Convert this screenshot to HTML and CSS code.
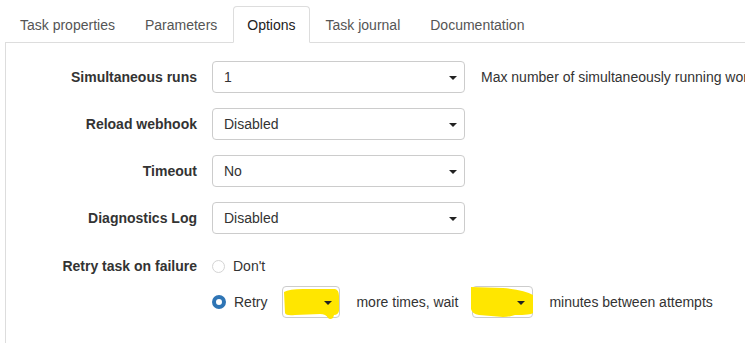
FILE: index.html
```html
<!DOCTYPE html>
<html>

<head>
    <meta charset="utf-8" />
    <title>Task options</title>
    <link rel="stylesheet" href="styles.css">
</head>

<body>
    <div class="page">
        <ul class="tabs">
            <li><a href="#">Task properties</a></li>
            <li><a href="#">Parameters</a></li>
            <li class="active"><a href="#">Options</a></li>
            <li><a href="#">Task journal</a></li>
            <li><a href="#">Documentation</a></li>
        </ul>
        <div class="panel">
            <div class="form-row">
                <label class="row-label">Simultaneous runs</label>
                <div class="select"><span>1</span><i class="caret"></i></div>
                <span class="help">Max number of simultaneously running workers</span>
            </div>
            <div class="form-row">
                <label class="row-label">Reload webhook</label>
                <div class="select"><span>Disabled</span><i class="caret"></i></div>
            </div>
            <div class="form-row">
                <label class="row-label">Timeout</label>
                <div class="select"><span>No</span><i class="caret"></i></div>
            </div>
            <div class="form-row">
                <label class="row-label">Diagnostics Log</label>
                <div class="select"><span>Disabled</span><i class="caret"></i></div>
            </div>
            <div class="form-row retry-row">
                <label class="row-label top">Retry task on failure</label>
                <div class="retry-options">
                    <div class="radio-line first">
                        <span class="radio"></span>
                        <span>Don't</span>
                    </div>
                    <div class="radio-line">
                        <span class="radio checked"></span>
                        <span>Retry</span>
                        <div class="select small count">
                            <svg class="marker" width="62" height="34" viewBox="0 0 62 34">
                                <path d="M1 5 Q6 2 20 2 L52 2 Q56 3 56 9 L56 24 Q55 28 51 28 L50 31 Q47 33 45 31 Q43 27 37 27 L12 28 Q3 29 2 26 Z" fill="#ffe600" />
                            </svg>
                            <i class="caret"></i>
                        </div>
                        <span class="after">more times, wait</span>
                        <div class="select small wait">
                            <svg class="marker" width="64" height="34" viewBox="0 0 64 34">
                                <path d="M-2 0 L30 1 Q52 3 60 8 L60 26 Q58 28 42 28 Q36 30 30 30 L6 28 Q-1 27 -2 22 Z" fill="#ffe600" />
                            </svg>
                            <i class="caret"></i>
                        </div>
                        <span class="after">minutes between attempts</span>
                    </div>
                </div>
            </div>
        </div>
    </div>
</body>

</html>
```

FILE: styles.css
```css
* {
    box-sizing: border-box;
}

html,
body {
    font-family: 'Liberation Sans', Arial, sans-serif;
    font-size: 14px;
    line-height: 20px;
    color: #333;
    margin: 0;
    padding: 0;
    background: #fff;
    overflow: hidden;
}

.page {
    padding: 6px 0 0 5px;
    height: 345px;
}

/* tabs */

.tabs {
    list-style: none;
    margin: 0;
    padding: 0 0 0 1px;
    display: flex;
    border-bottom: 1px solid #ddd;
}

.tabs li {
    margin: 0 2px -1px 0;
}

.tabs a {
    display: block;
    padding: 8px 13px 7px;
    border: 1px solid transparent;
    border-radius: 4px 4px 0 0;
    color: #555;
    text-decoration: none;
    white-space: nowrap;
}

.tabs li.active a {
    color: #222;
    background: #fff;
    border-color: #ddd #ddd transparent;
}

/* panel */

.panel {
    border-left: 1px solid #ddd;
    padding-top: 18px;
    height: 300px;
}

.form-row {
    display: grid;
    grid-template-columns: 191px 253px auto;
    column-gap: 15px;
    align-items: center;
    margin-bottom: 15px;
}

.row-label {
    font-weight: bold;
    text-align: right;
    white-space: nowrap;
}

.row-label.top {
    align-self: start;
    padding-top: 7px;
}

.help {
    margin-left: 1px;
    white-space: nowrap;
}

.select {
    position: relative;
    height: 32px;
    border: 1px solid #ccc;
    border-radius: 4px;
    padding: 5px 11px;
    display: flex;
    align-items: center;
    background: #fff;
}

.caret {
    position: absolute;
    right: 7px;
    top: 14px;
    width: 0;
    height: 0;
    border-top: 4px solid #222;
    border-left: 4px solid transparent;
    border-right: 4px solid transparent;
}

/* retry options */

.retry-options {
    grid-column: 2 / 4;
}

.radio-line {
    display: flex;
    align-items: center;
    white-space: nowrap;
}

.radio-line.first {
    padding-top: 7px;
    height: 27px;
    margin-bottom: 10px;
}

.radio {
    width: 13px;
    height: 13px;
    border-radius: 50%;
    border: 1px solid #d4d4d4;
    background: #fff;
    margin-right: 8px;
}

.radio.checked {
    width: 14px;
    height: 14px;
    border: 4px solid #2f75b5;
}

.select.small {
    margin-left: 15px;
    padding: 0;
}

.select.count {
    width: 58px;
}

.select.wait {
    width: 61px;
    margin-left: 14px;
}

.after {
    margin-left: 16px;
}

.marker {
    position: absolute;
    left: 0;
    top: 0;
    overflow: visible;
}
```
